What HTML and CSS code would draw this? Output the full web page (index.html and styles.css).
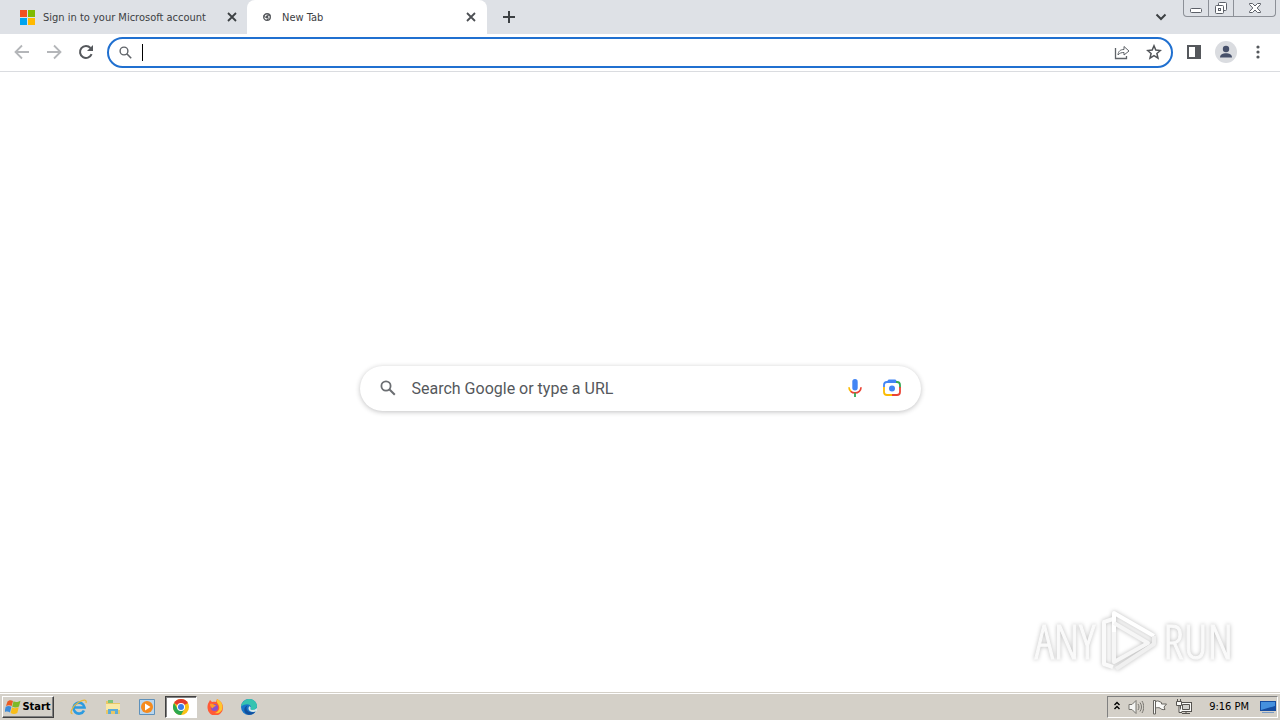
FILE: index.html
```html
<!DOCTYPE html>
<html lang="en">
<head>
    <meta charset="UTF-8">
    <meta name="viewport" content="width=device-width, initial-scale=1.0">
    <title>New Tab</title>
    <link rel="stylesheet" href="styles.css">
</head>
<body>
    <header class="tab-strip">
        <div class="tab">
            <svg class="favicon" width="15" height="15" viewBox="0 0 15 15">
                <path fill="#f25022" d="M0 0h7v7H0z"/><path fill="#7fba00" d="M8 0h7v7H8z"/>
                <path fill="#00a4ef" d="M0 8h7v7H0z"/><path fill="#ffb900" d="M8 8h7v7H8z"/>
            </svg>
            <span class="tab-title">Sign in to your Microsoft account</span>
            <button class="tab-close" aria-label="Close tab">
                <svg width="10" height="10" viewBox="0 0 10 10"><path d="M1 1l8 8M9 1L1 9" stroke="#3c4043" stroke-width="1.800"/></svg>
            </button>
        </div>
        <div class="tab active">
            <svg class="favicon" width="8" height="8" viewBox="0 0 8 8">
                <circle cx="4" cy="4" r="3.300" fill="#fff" stroke="#55585c" stroke-width="1.400"/>
                <circle cx="4" cy="4" r="1.400" fill="#55585c"/>
                <path d="M4 2.300h3.400M2.500 4.800L.9 2M5.500 4.800L3.900 7.600" stroke="#55585c"/>
            </svg>
            <span class="tab-title">New Tab</span>
            <button class="tab-close" aria-label="Close tab">
                <svg width="10" height="10" viewBox="0 0 10 10"><path d="M1 1l8 8M9 1L1 9" stroke="#4c4f53" stroke-width="1.800"/></svg>
            </button>
        </div>
        <button class="new-tab" aria-label="New tab">
            <svg width="12" height="12" viewBox="0 0 12 12"><path d="M6 0v12M0 6h12" stroke="#3c4043" stroke-width="2"/></svg>
        </button>
        <button class="tab-search" aria-label="Search tabs">
            <svg width="12" height="8" viewBox="0 0 12 8"><path d="M1.500 1.500L6 6l4.500-4.500" fill="none" stroke="#3c4043" stroke-width="2"/></svg>
        </button>
        <div class="window-controls">
            <button class="win-min" aria-label="Minimize">
                <svg width="14" height="14" viewBox="0 0 14 14"><rect x="1.500" y="7.500" width="11" height="4" rx="1" fill="#fff" stroke="#5c6068"/></svg>
            </button>
            <button class="win-max" aria-label="Restore">
                <svg width="14" height="14" viewBox="0 0 14 14" fill="#fff" stroke="#5c6068"><rect x="4.500" y="1.500" width="8" height="8" rx="1"/><rect x="1.500" y="4.500" width="8" height="8" rx="1"/><rect x="4.500" y="7.500" width="2" height="2"/></svg>
            </button>
            <button class="win-close" aria-label="Close">
                <svg width="14" height="14" viewBox="0 0 14 14"><path d="M1.500 2.500h3L7 5l2.500-2.500h3v1L9.200 7l3.300 3.500v1h-3L7 9l-2.500 2.500h-3v-1L4.800 7 1.500 3.500z" fill="#fff" stroke="#5c6068"/></svg>
            </button>
        </div>
    </header>

    <nav class="toolbar">
        <button class="tool" aria-label="Back">
            <svg width="16" height="16" viewBox="0 0 16 16"><path d="M15 8H2M8 1.500L1.500 8 8 14.500" fill="none" stroke="#b4b6b9" stroke-width="1.800"/></svg>
        </button>
        <button class="tool" aria-label="Forward">
            <svg width="16" height="16" viewBox="0 0 16 16"><path d="M1 8h13M8 1.500L14.500 8 8 14.500" fill="none" stroke="#b4b6b9" stroke-width="1.800"/></svg>
        </button>
        <button class="tool" aria-label="Reload">
            <svg width="16" height="16" viewBox="0 0 16 16"><path d="M13.600 10.200A6 6 0 1 1 12.500 4" fill="none" stroke="#55585c" stroke-width="2"/><path d="M15 1v6H9z" fill="#55585c"/></svg>
        </button>
        <div class="omnibox">
            <svg width="13" height="13" viewBox="0 0 13 13"><circle cx="5" cy="5" r="3.900" fill="none" stroke="#5f6368" stroke-width="1.400"/><path d="M7.800 7.800l4.400 4.400" stroke="#5f6368" stroke-width="1.600"/></svg>
            <span class="caret"></span>
            <input type="text" class="address" aria-label="Address and search bar">
            <button class="tool" aria-label="Share this page">
                <svg width="16" height="16" viewBox="0 0 16 16" fill="none" stroke="#5f6368"><path d="M1.500 4v10.500h11V12" stroke-width="1.300"/><path d="M4 11c.3-4 2.500-5.500 6-5.500V2.500L15 7l-5 4V8.500C7.500 8.500 5.500 9 4 11z"/></svg>
            </button>
            <button class="tool" aria-label="Bookmark this tab">
                <svg width="16" height="16" viewBox="0 0 16 16"><path d="M8 1.800l1.800 4.300 4.600.4-3.500 3 1.100 4.600L8 11.700l-4 2.400 1.100-4.600-3.500-3 4.600-.4z" fill="none" stroke="#505357" stroke-width="1.500"/></svg>
            </button>
        </div>
        <button class="tool" aria-label="Side panel">
            <svg width="14" height="14" viewBox="0 0 14 14"><path d="M1 1h12v12H1z" fill="#fff" stroke="#55585c" stroke-width="2"/><path d="M8 1h5v12H8z" fill="#55585c"/></svg>
        </button>
        <button class="tool" aria-label="Profile">
            <svg width="22" height="22" viewBox="0 0 22 22"><circle cx="11" cy="11" r="11" fill="#dadce0"/><circle cx="11" cy="8" r="3.200" fill="#46506a"/><path d="M5 16.500c0-3 3-4.300 6-4.300s6 1.300 6 4.300z" fill="#46506a"/></svg>
        </button>
        <button class="tool" aria-label="Menu">
            <svg width="4" height="14" viewBox="0 0 4 14" fill="#55585c"><circle cx="2" cy="2" r="1.600"/><circle cx="2" cy="7" r="1.600"/><circle cx="2" cy="12" r="1.600"/></svg>
        </button>
    </nav>

    <main class="page">
        <form class="search-box">
            <svg width="16" height="16" viewBox="0 0 16 16"><circle cx="6" cy="6" r="4.600" fill="none" stroke="#6b6e72" stroke-width="1.800"/><path d="M9.300 9.300l5.500 5.500" stroke="#6b6e72" stroke-width="2"/></svg>
            <input type="text" class="search-input" placeholder="Search Google or type a URL" aria-label="Search Google or type a URL">
            <button type="button" aria-label="Search by voice">
                <svg width="14" height="18" viewBox="0 0 14 18" fill="none">
                    <rect x="4.300" y="0" width="5.400" height="11.500" rx="2.700" fill="#4285f4"/>
                    <path d="M1 8.300c0 1.900.8 3.300 2 4.300" stroke="#fbbc04" stroke-width="1.700"/>
                    <path d="M2.700 12.300c2.400 2.200 6.200 2.200 8.600 0 1.200-1 1.700-2.400 1.700-4" stroke="#ea4335" stroke-width="1.700"/>
                    <path d="M7 13.800V18" stroke="#34a853" stroke-width="1.800"/>
                </svg>
            </button>
            <button type="button" aria-label="Search by image">
                <svg width="18" height="18" viewBox="0 0 18 18" fill="none" stroke-width="1.800">
                    <path d="M1 8V6a3 3 0 0 1 3-3h10" stroke="#4285f4"/>
                    <path d="M5 2.500L6 1.500h6l1 1" stroke="#4285f4"/>
                    <path d="M13 3h1a3 3 0 0 1 3 3v3" stroke="#34a853"/>
                    <path d="M17 8v5a3 3 0 0 1-3 3H9" stroke="#ea4335"/>
                    <path d="M1 8v5a3 3 0 0 0 3 3h5" stroke="#fbbc04"/>
                    <circle cx="9" cy="9.500" r="3" fill="#4285f4"/>
                </svg>
            </button>
        </form>
        <div class="watermark">
            <span>ANY</span>
            <svg width="60" height="66" viewBox="0 0 60 66" fill="none" stroke-width="4" stroke-linejoin="round">
                <path d="M14 11L5 14v42l9 3" stroke="#fafafa"/>
                <path d="M15 48V5l40 23" stroke="#fff"/>
                <path d="M15 15l34 20L15 54V24" stroke="#f6f6f6"/>
                <path d="M55 28v8L17 61" stroke="#f0f0f0"/>
            </svg>
            <span>RUN</span>
        </div>
    </main>

    <footer class="taskbar">
        <button class="start">
            <svg width="16" height="16" viewBox="0 0 16 16">
                <path d="M2.500 2.500C4.500.8 6 .9 8 2L6.700 7C5 6 3 6 1 7z" fill="#ea5b23"/>
                <path d="M8.500 2.300c2 1 4 1 7-.5L14 7.500c-2 1.200-4.500 1.200-6.800.2z" fill="#7db928"/>
                <path d="M.7 7.700c2-1 4-1 5.700.1L5 13.500c-1.700-1.200-3.500-1.200-5.500-.4z" fill="#3c8bd9"/>
                <path d="M7 8.300c2 1.200 4.300 1 6.700 0l-1.400 5.700c-2.300 1.300-4.500 1.200-6.700 0z" fill="#f8bd19"/>
            </svg>
            Start
        </button>
        <div class="quick-launch">
            <button aria-label="Internet Explorer">
                <svg width="18" height="18" viewBox="0 0 18 18" fill="none"><path d="M14 12.500A5.500 5.500 0 1 1 14.500 9.500H4" stroke="#2c9be0" stroke-width="2.600"/><path d="M2.500 15.500C-1 16 2 8 9 4c5-3 8-2.500 7 1" stroke="#e9b83a" stroke-width="1.300"/></svg>
            </button>
            <button aria-label="Explorer">
                <svg width="18" height="18" viewBox="0 0 18 18"><path d="M2 3h5l1 2h8v11H2z" fill="#e9c766"/><path d="M4 2h5v3H4z" fill="#7dc47a"/><path d="M2 6h14v6H2z" fill="#f9e9a6"/><path d="M4 16v-5h10v5h-3v-3H7v3z" fill="#5cacd8"/></svg>
            </button>
            <button aria-label="Media Player">
                <svg width="18" height="18" viewBox="0 0 18 18"><path d="M1.500 1.500h15v15h-15z" fill="#b9d6ee" stroke="#5e91bb"/><circle cx="9" cy="9" r="6" fill="#f58a1d"/><path d="M7 5.500v7L12.500 9z" fill="#fff"/></svg>
            </button>
            <button class="pressed" aria-label="Chrome">
                <svg width="16" height="16" viewBox="0 0 16 16"><circle cx="8" cy="8" r="8" fill="#fbc116"/><path d="M8 8L1.070 4A8 8 0 0 1 14.930 4z" fill="#e33b2e"/><path d="M1.070 4A8 8 0 0 0 8 16l3.400-6H4.600z" fill="#2da94f"/><circle cx="8" cy="8" r="4" fill="#fff"/><circle cx="8" cy="8" r="3" fill="#3b7de9"/></svg>
            </button>
            <button aria-label="Firefox">
                <svg width="16" height="16" viewBox="0 0 16 16"><path d="M2 3l1-2 2 2c2-.5 3-.5 4 0L10 0c4 2 6 5 6 8.500A7.700 7.700 0 0 1 .5 9C.4 6 1 4.500 2 3z" fill="#ff5a36"/><path d="M10 0c4 2 6 5 5.500 9C15 13 11 15 8 14c5-2 5-6 3-9C9.500 3.500 9.500 2 10 0z" fill="#ffc62e"/><circle cx="7.500" cy="8.500" r="3.500" fill="#8951cf"/><path d="M3 5c3-1 4 1 6 1.500-1 1.500-3 1-3 3C4 9 3 7 3 5z" fill="#ff9a2b"/></svg>
            </button>
            <button aria-label="Edge">
                <svg width="16" height="16" viewBox="0 0 16 16"><circle cx="8" cy="8" r="8" fill="#1776c9"/><path d="M0 7.500C1 2 5 0 8.500 0 13 0 16 3.500 16 7c0 3-2.500 4-5 4-2 0-2-1-1.300-2C11 6 6 3 0 7.500z" fill="#35c3b0"/><path d="M5.500 9c0 3.500 3.500 5 8.500 4-2 3-7 4-9.500 1S3.500 7 7 6.500C5.800 7.200 5.500 8 5.500 9z" fill="#124f9c"/><path d="M9.700 9C9 10 9.500 11 11 11c2 0 4-.7 5-2v3c-4 2-8.500.5-8.500-2.500 0-1 .5-1.800 1.200-2.200.7.400 1.100 1 1 1.700z" fill="#d8e8e8"/></svg>
            </button>
        </div>
        <div class="tray">
            <button aria-label="Show hidden icons">
                <svg width="6" height="12" viewBox="0 0 6 12" fill="none" stroke="#000" stroke-width="1.400"><path d="M.5 4L3 1.500 5.500 4M.5 8L3 5.500 5.500 8"/></svg>
            </button>
            <button aria-label="Volume">
                <svg width="16" height="16" viewBox="0 0 16 16" fill="none" stroke="#77756f"><path d="M1 5.500h3L8 1.500v13l-4-4H1z" fill="#f5f5f3"/><path d="M10 5c1.300 2 1.300 4 0 6M12 3.500c2 3 2 6 0 9M14 2c2.300 4 2.300 8 0 12"/></svg>
            </button>
            <button aria-label="Action Center">
                <svg width="16" height="16" viewBox="0 0 16 16" stroke="#66645f"><path d="M3.500 2.500c3-1.500 4 .5 6 1v1.500h5L12 8l1 2.500c-3 .5-4-.5-5-1.500-1.500-.5-3-.5-4.500 0z" fill="#fafaf8"/><path d="M1.500 1.500h2V15h-2z" fill="#fafaf8"/></svg>
            </button>
            <button aria-label="Network">
                <svg width="16" height="16" viewBox="0 0 16 16" stroke="#55534f"><rect x="4.500" y="3.500" width="11" height="9" fill="#fafaf8"/><path d="M6.500 5.500h7v5h-7z" fill="#d0d0cc"/><path d="M6 14.500h8M10 12v3"/><path d="M.5 2.500h5v4h-5zM1.500 0v2M4.500 0v2M3 7v6.500h3" fill="#fafaf8"/></svg>
            </button>
            <time class="clock">9:16 PM</time>
            <button aria-label="Show desktop">
                <svg width="16" height="14" viewBox="0 0 16 14"><path d="M0 1h16v10H0z" fill="#154ca0"/><path d="M1 2h14v4L1 10z" fill="#4590de"/><path d="M2 12h12v1H2z" fill="#789ac4"/></svg>
            </button>
        </div>
    </footer>
</body>
</html>
```
FILE: styles.css
```css
* {
    box-sizing: border-box;
}
body {
    margin: 0;
    min-height: 100vh;
    display: flex;
    flex-direction: column;
    background-color: #fff;
    font-family: "DejaVu Sans Condensed", "DejaVu Sans", sans-serif;
    font-size: 11px;
    color: #3c4043;
}
button {
    display: flex;
    align-items: center;
    justify-content: center;
    padding: 0;
    border: none;
    background: none;
    font: inherit;
    color: inherit;
}
input {
    flex: 1;
    min-width: 0;
    padding: 0;
    border: none;
    outline: none;
    background: none;
}
svg {
    flex: none;
}

/* tabs */
.tab-strip {
    display: flex;
    height: 34px;
    background-color: #dee1e6;
}
.tab {
    display: flex;
    align-items: center;
    gap: 8px;
    width: 247px;
    padding: 0 7px 0 20px;
}
.tab.active {
    gap: 11px;
    width: 240px;
    padding: 0 8px 0 16px;
    border-radius: 8px 8px 0 0;
    background-color: #fff;
}
.tab-title {
    flex: 1;
    white-space: nowrap;
    overflow: hidden;
}
.tab-close {
    width: 16px;
    height: 16px;
}
.new-tab {
    width: 28px;
    margin-left: 8px;
}
.tab-search {
    width: 28px;
    margin-left: auto;
}
.window-controls {
    display: flex;
    height: 17px;
    margin: 0 4px 0 8px;
    border: 1px solid #8c9097;
    border-top: none;
    border-radius: 0 0 4px 4px;
}
.window-controls button {
    width: 25px;
    border-right: 1px solid #8c9097;
}
.window-controls .win-close {
    width: 41px;
    border-right: none;
}

/* toolbar */
.toolbar {
    display: flex;
    align-items: center;
    height: 38px;
    padding: 0 6px;
    border-bottom: 1px solid #dadce0;
}
.tool {
    width: 32px;
    height: 27px;
}
.toolbar > .tool {
    height: 30px;
    padding-bottom: 2px;
}
.omnibox {
    flex: 1;
    display: flex;
    align-items: center;
    height: 31px;
    margin: 0 5px;
    padding: 0 1px 0 10px;
    border: 2px solid #2070d0;
    border-radius: 16px;
}
.omnibox .tool {
    padding-bottom: 1px;
}
.caret {
    width: 1px;
    height: 17px;
    margin-left: 10px;
    background-color: #000;
}

/* new tab page */
.page {
    position: relative;
    flex: 1;
    display: flex;
    align-items: center;
    justify-content: center;
    padding: 12px 16px 0;
}
.search-box {
    display: flex;
    align-items: center;
    width: 100%;
    max-width: 561px;
    height: 45px;
    padding: 0 20px;
    border-radius: 23px;
    box-shadow: 0 1px 5px rgba(32, 33, 36, 0.28);
}
.search-input {
    margin-left: 16px;
    font-family: Roboto, sans-serif;
    font-size: 16px;
}
.search-input::placeholder {
    color: #55585c;
    opacity: 1;
}
.search-box button {
    margin-left: 21px;
}
.watermark {
    position: absolute;
    right: 47px;
    bottom: 18px;
    display: flex;
    align-items: center;
    gap: 4px;
    font-family: "Open Sans Condensed Light", "Open Sans Condensed", "Liberation Sans Narrow", sans-serif;
    font-size: 48px;
    line-height: 66px;
    color: #fafafa;
    -webkit-text-stroke: 1px #fafafa;
    filter: drop-shadow(0 0 2px #bbb);
}

/* taskbar */
.taskbar {
    display: flex;
    align-items: center;
    height: 28px;
    padding: 0 2px;
    border-top: 1px solid #d4d0c8;
    background-color: #d4d0c8;
    box-shadow: inset 0 1px #fff;
    color: #000;
}
.start {
    gap: 1px;
    width: 52px;
    height: 22px;
    border: 1px solid;
    border-color: #fff #404040 #404040 #fff;
    box-shadow: inset -1px -1px #808080;
    font-weight: bold;
}
.quick-launch {
    display: flex;
    gap: 2px;
    margin-left: 9px;
}
.quick-launch button {
    width: 32px;
    height: 22px;
}
.quick-launch .pressed {
    border: 1px solid;
    border-color: #404040 #fff #fff #404040;
    background-color: #fff;
    box-shadow: inset 1px 1px #808080;
}
.tray {
    display: flex;
    align-items: center;
    gap: 8px;
    height: 22px;
    margin-left: auto;
    padding: 0 1px 0 6px;
    border: 1px solid;
    border-color: #808080 #fff #fff #808080;
}
.clock {
    margin: 0 3px 0 9px;
}
```
